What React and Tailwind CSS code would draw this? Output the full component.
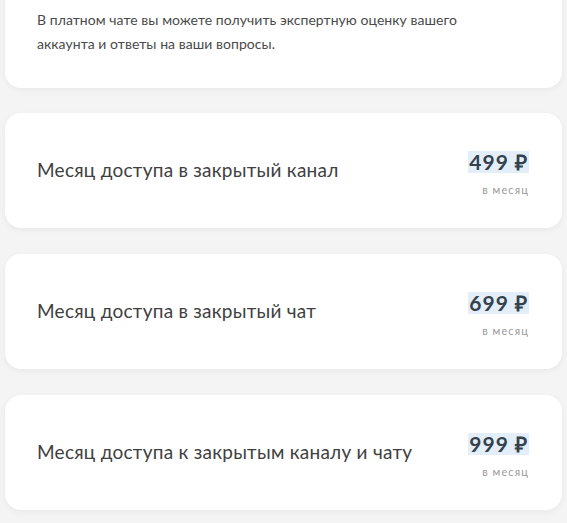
const plans = [
  { title: 'Месяц доступа в закрытый канал', price: '499 ₽' },
  { title: 'Месяц доступа в закрытый чат', price: '699 ₽' },
  { title: 'Месяц доступа к закрытым каналу и чату', price: '999 ₽' },
];

export default function App() {
  return (
    <div className="min-h-screen bg-[#f4f4f4] px-[5px] overflow-hidden" style={{ fontFamily: 'Lato, "Open Sans", sans-serif' }}>
      {/* Intro card, top cut off */}
      <div className="-mt-5 bg-white rounded-2xl shadow-[0_2px_6px_rgba(0,0,0,0.05)] pt-[28px] pb-8 px-8">
        <p className="text-[14px] leading-6 text-[#4a4a4a] tracking-[0.05px]">
          В платном чате вы можете получить экспертную оценку вашего
          <br />
          аккаунта и ответы на ваши вопросы.
        </p>
      </div>

      <div className="mt-[25px] flex flex-col gap-[26px]">
        {plans.map((p) => (
          <div
            key={p.price}
            className="h-[115px] bg-white rounded-2xl shadow-[0_2px_6px_rgba(0,0,0,0.05)] pl-8 pr-[33px] flex items-center justify-between"
          >
            <div className="text-[19px] tracking-[0.25px] text-[#404040]">{p.title}</div>
            <div className="flex flex-col items-end pt-2">
              <div className="bg-[#e3eef8] px-px text-[21px] leading-[22px] font-bold text-[#33414d] tracking-[1px]">
                {p.price}
              </div>
              <div className="mt-[9px] text-[11px] text-[#9a9a9a] tracking-[1.1px]">в месяц</div>
            </div>
          </div>
        ))}
      </div>
    </div>
  );
}
